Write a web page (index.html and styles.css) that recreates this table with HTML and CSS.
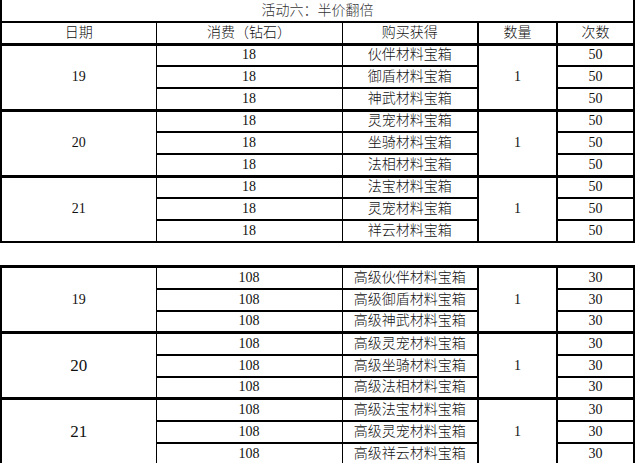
FILE: index.html
```html
<!DOCTYPE html>
<html lang="zh">
<head>
<meta charset="utf-8">
<title>活动六：半价翻倍</title>
<link rel="stylesheet" href="styles.css">
</head>
<body>
<div class="page">
<table class="sheet first">
  <colgroup><col class="w1"><col class="w2"><col class="w3"><col class="w4"><col class="w5"></colgroup>
  <thead>
    <tr class="title"><td colspan="5">活动六：半价翻倍</td></tr>
    <tr class="head"><td class="date">日期</td><td>消费（钻石）</td><td class="item">购买获得</td><td class="qty">数量</td><td class="count">次数</td></tr>
  </thead>
  <tbody>
    <tr><td class="date" rowspan="3">19</td><td>18</td><td class="item">伙伴材料宝箱</td><td class="qty" rowspan="3">1</td><td class="count">50</td></tr>
    <tr><td>18</td><td class="item">御盾材料宝箱</td><td class="count">50</td></tr>
    <tr><td>18</td><td class="item">神武材料宝箱</td><td class="count">50</td></tr>
  </tbody>
  <tbody>
    <tr><td class="date" rowspan="3">20</td><td>18</td><td class="item">灵宠材料宝箱</td><td class="qty" rowspan="3">1</td><td class="count">50</td></tr>
    <tr><td>18</td><td class="item">坐骑材料宝箱</td><td class="count">50</td></tr>
    <tr><td>18</td><td class="item">法相材料宝箱</td><td class="count">50</td></tr>
  </tbody>
  <tbody class="last">
    <tr><td class="date" rowspan="3">21</td><td>18</td><td class="item">法宝材料宝箱</td><td class="qty" rowspan="3">1</td><td class="count">50</td></tr>
    <tr><td>18</td><td class="item">灵宠材料宝箱</td><td class="count">50</td></tr>
    <tr><td>18</td><td class="item">祥云材料宝箱</td><td class="count">50</td></tr>
  </tbody>
</table>

<table class="sheet second">
  <colgroup><col class="w1"><col class="w2"><col class="w3"><col class="w4"><col class="w5"></colgroup>
  <tbody>
    <tr><td class="date" rowspan="3">19</td><td>108</td><td class="item">高级伙伴材料宝箱</td><td class="qty" rowspan="3">1</td><td class="count">30</td></tr>
    <tr><td>108</td><td class="item">高级御盾材料宝箱</td><td class="count">30</td></tr>
    <tr><td>108</td><td class="item">高级神武材料宝箱</td><td class="count">30</td></tr>
  </tbody>
  <tbody>
    <tr><td class="date big" rowspan="3">20</td><td>108</td><td class="item">高级灵宠材料宝箱</td><td class="qty" rowspan="3">1</td><td class="count">30</td></tr>
    <tr><td>108</td><td class="item">高级坐骑材料宝箱</td><td class="count">30</td></tr>
    <tr><td>108</td><td class="item">高级法相材料宝箱</td><td class="count">30</td></tr>
  </tbody>
  <tbody class="last">
    <tr><td class="date big" rowspan="3">21</td><td>108</td><td class="item">高级法宝材料宝箱</td><td class="qty" rowspan="3">1</td><td class="count">30</td></tr>
    <tr><td>108</td><td class="item">高级灵宠材料宝箱</td><td class="count">30</td></tr>
    <tr><td>108</td><td class="item">高级祥云材料宝箱</td><td class="count">30</td></tr>
  </tbody>
</table>
</div>
</body>
</html>
```

FILE: styles.css
```css
html, body {
  margin: 0;
  padding: 0;
  background: #fff;
}

.page {
  display: flex;
  flex-direction: column;
  gap: 22px;
  width: 636px;
}

.sheet {
  border-collapse: collapse;
  table-layout: fixed;
  width: 633px;
  font-family: "Liberation Serif", "Noto Sans CJK SC", serif;
  font-size: 14px;
  font-weight: 300;
  color: #111;
}

.w1 { width: 155px; }
.w2 { width: 186px; }
.w3 { width: 136px; }
.w4 { width: 79px; }
.w5 { width: 77px; }

.sheet tr {
  height: 22px;
}

.sheet tr.title {
  height: 22px;
}

.sheet td {
  border: 1px solid #000;
  padding: 0;
  line-height: 16px;
  text-align: center;
  vertical-align: middle;
  white-space: nowrap;
  overflow: hidden;
}

.sheet .title td {
  border-top: none;
  border-left: 2px solid #000;
  border-right: 2px solid #000;
  border-bottom: 2px solid #000;
  color: #333;
}

.sheet .head td {
  border-top: 2px solid #000;
  border-bottom: 3px solid #000;
}

.sheet td.date {
  border-left: 2px solid #000;
}

.sheet td.item {
  border-right: 2px solid #000;
}

.sheet td.qty {
  border-left: 2px solid #000;
  border-right: 2px solid #000;
}

.sheet td.count {
  border-right: 2px solid #000;
}

.sheet tbody td {
  border-top: 2px solid #000;
}

.sheet tbody tr:first-child td {
  border-top: 3px solid #000;
}

.sheet tbody.last tr:last-child td,
.sheet tbody.last td.date,
.sheet tbody.last td.qty {
  border-bottom: 2px solid #000;
}

.sheet td.big {
  font-size: 17px;
}
```
